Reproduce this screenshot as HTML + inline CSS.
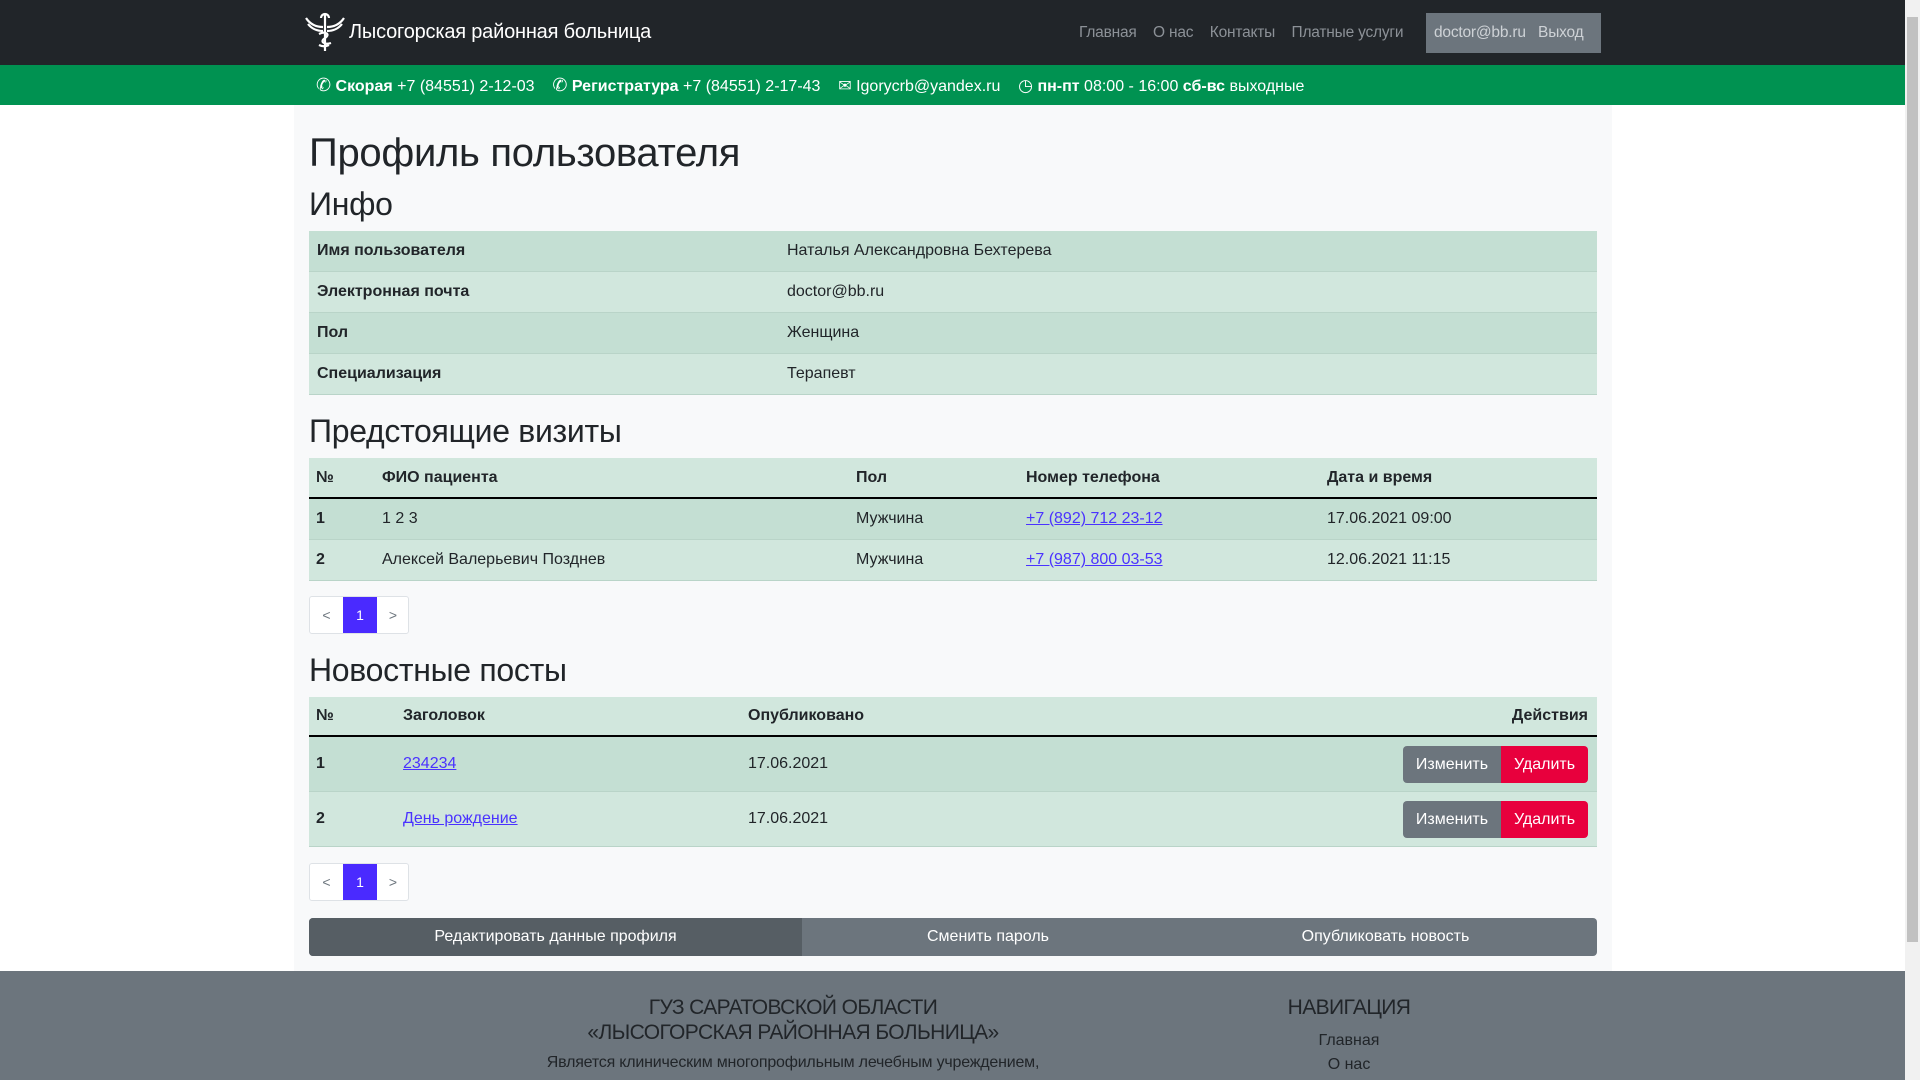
<!DOCTYPE html>
<html><head><meta charset="utf-8"><style>
*{box-sizing:border-box;margin:0;padding:0}
body{width:1920px;height:1080px;overflow:hidden;font-family:"Liberation Sans",sans-serif;font-size:16px;color:#212529;background:#fff;position:relative}
.a{position:absolute}
.nav{left:0;top:0;width:1905px;height:65px;background:#212529}
.green{left:0;top:65px;width:1905px;height:40px;background:#009251;color:#fff;font-size:16px}
.cont{left:294px;top:105px;width:1318px;height:866px;background:#f8f9fa}
h1{position:absolute;left:309px;font-weight:400;font-size:40px;line-height:48px;letter-spacing:-0.3px}
h2{position:absolute;left:309px;font-weight:400;font-size:32px;line-height:38px;letter-spacing:-0.3px}
.tbl{position:absolute;left:309px;width:1288px}
.row{position:absolute;left:0;width:1288px;border-bottom:1px solid #b9d4c8}
.c{position:absolute;top:0;height:100%;display:flex;align-items:center}
.b{font-weight:700}
.dk{background:#c4dfd3}.lt{background:#d1e7dd}
a{color:#4a32ff;text-decoration:underline}
.pg{position:absolute;left:309px;height:38px;width:100px;border:1px solid #dee2e6;background:#fff;border-radius:3px}
.pg span{position:absolute;top:0;height:36px;display:flex;align-items:center;justify-content:center;color:#6c757d;font-size:14px}
.btn{position:absolute;display:flex;align-items:center;justify-content:center;color:#fff;font-size:16px}
.foot{left:0;top:971px;width:1905px;height:109px;background:#6c757d}
.ft{position:absolute;text-align:center;color:#212529}
</style></head><body>
<div class="a nav"></div>
<svg class="a" style="left:304px;top:12px" width="42" height="40" viewBox="0 0 42 40" fill="none" stroke="#fff" stroke-width="2.2"><path d="M21 2v37M17 6a4 4 0 0 1 8 0M2 6c4 6 10 9 17 9M40 6c-4 6-10 9-17 9M4 12c4 5 9 7 15 7M38 12c-4 5-9 7-15 7M15 22c6-3 12 0 6 4c-6 4 0 7 6 5M15 33c4 2 8 1 10 0"/></svg>
<div class="a" style="left:349px;top:19px;color:#fff;font-size:20px;line-height:26px;letter-spacing:-0.2px">Лысогорская районная больница</div>
<div class="a" style="left:1079px;top:23px;color:#8c9197;font-size:15.5px;line-height:20px;letter-spacing:-0.2px">Главная&nbsp;&nbsp;&nbsp; О нас&nbsp;&nbsp;&nbsp; Контакты&nbsp;&nbsp;&nbsp; Платные услуги</div>
<div class="a" style="left:1426px;top:13px;width:175px;height:40px;background:#6c757d"></div>
<div class="a" style="left:1434px;top:23px;color:#ced2d6;font-size:15.5px;line-height:20px;letter-spacing:-0.2px">doctor@bb.ru&nbsp;&nbsp;&nbsp;Выход</div>
<div class="a green"></div>
<div class="a" style="left:316px;top:75px;color:#fff;line-height:20px;white-space:nowrap;font-size:16px">
<span style="font-size:18px">✆</span> <b>Скорая</b> +7 (84551) 2-12-03 &nbsp;&nbsp; <span style="font-size:18px">✆</span> <b>Регистратура</b> +7 (84551) 2-17-43 &nbsp;&nbsp; <span style="font-size:16px">✉</span> Igorycrb@yandex.ru &nbsp;&nbsp; <span style="font-size:17px">◷</span> <b>пн-пт</b> 08:00 - 16:00 <b>сб-вс</b> выходные</div>
<div class="a cont"></div>
<h1 style="top:129px">Профиль пользователя</h1>
<h2 style="top:185px">Инфо</h2>
<div class="tbl" style="top:231px;height:164px">
<div class="row dk" style="top:0;height:41px"><div class="c b" style="left:8px">Имя пользователя</div><div class="c" style="left:478px">Наталья Александровна Бехтерева</div></div>
<div class="row lt" style="top:41px;height:41px"><div class="c b" style="left:8px">Электронная почта</div><div class="c" style="left:478px">doctor@bb.ru</div></div>
<div class="row dk" style="top:82px;height:41px"><div class="c b" style="left:8px">Пол</div><div class="c" style="left:478px">Женщина</div></div>
<div class="row lt" style="top:123px;height:41px"><div class="c b" style="left:8px">Специализация</div><div class="c" style="left:478px">Терапевт</div></div>
</div>
<h2 style="top:412px">Предстоящие визиты</h2>
<div class="tbl" style="top:458px;height:122px">
<div class="row lt b" style="top:0;height:41px;border-bottom:2px solid #000"><div class="c" style="left:7px">№</div><div class="c" style="left:73px">ФИО пациента</div><div class="c" style="left:547px">Пол</div><div class="c" style="left:717px">Номер телефона</div><div class="c" style="left:1018px">Дата и время</div></div>
<div class="row dk" style="top:41px;height:41px"><div class="c b" style="left:7px">1</div><div class="c" style="left:73px">1 2 3</div><div class="c" style="left:547px">Мужчина</div><div class="c" style="left:717px"><a>+7 (892) 712 23-12</a></div><div class="c" style="left:1018px">17.06.2021 09:00</div></div>
<div class="row lt" style="top:82px;height:41px"><div class="c b" style="left:7px">2</div><div class="c" style="left:73px">Алексей Валерьевич Позднев</div><div class="c" style="left:547px">Мужчина</div><div class="c" style="left:717px"><a>+7 (987) 800 03-53</a></div><div class="c" style="left:1018px">12.06.2021 11:15</div></div>
</div>
<div class="pg" style="top:596px"><span style="left:0;width:33px">&lt;</span><span style="left:33px;width:34px;background:#4a2aff;color:#fff">1</span><span style="left:67px;width:32px">&gt;</span></div>
<h2 style="top:651px">Новостные посты</h2>
<div class="tbl" style="top:697px;height:150px">
<div class="row lt b" style="top:0;height:40px;border-bottom:2px solid #000"><div class="c" style="left:7px">№</div><div class="c" style="left:94px">Заголовок</div><div class="c" style="left:439px">Опубликовано</div><div class="c" style="right:9px">Действия</div></div>
<div class="row dk" style="top:40px;height:55px"><div class="c b" style="left:7px">1</div><div class="c" style="left:94px"><a>234234</a></div><div class="c" style="left:439px">17.06.2021</div></div>
<div class="row lt" style="top:95px;height:55px"><div class="c b" style="left:7px">2</div><div class="c" style="left:94px"><a>День рождение</a></div><div class="c" style="left:439px">17.06.2021</div></div>
</div>
<div class="btn" style="left:1403px;top:746px;width:98px;height:37px;background:#6c757d;border-radius:4px 0 0 4px">Изменить</div>
<div class="btn" style="left:1501px;top:746px;width:87px;height:37px;background:#e8003d;border-radius:0 4px 4px 0">Удалить</div>
<div class="btn" style="left:1403px;top:801px;width:98px;height:37px;background:#6c757d;border-radius:4px 0 0 4px">Изменить</div>
<div class="btn" style="left:1501px;top:801px;width:87px;height:37px;background:#e8003d;border-radius:0 4px 4px 0">Удалить</div>
<div class="pg" style="top:863px"><span style="left:0;width:33px">&lt;</span><span style="left:33px;width:34px;background:#4a2aff;color:#fff">1</span><span style="left:67px;width:32px">&gt;</span></div>
<div class="a" style="left:309px;top:918px;width:1288px;height:38px;background:#6c757d;border-radius:4px"></div>
<div class="btn" style="left:309px;top:918px;width:493px;height:38px;background:#565e64;border-radius:4px 0 0 4px">Редактировать данные профиля</div>
<div class="btn" style="left:802px;top:918px;width:372px;height:38px">Сменить пароль</div>
<div class="btn" style="left:1174px;top:918px;width:423px;height:38px">Опубликовать новость</div>
<div class="a foot"></div>
<div class="ft" style="left:493px;width:600px;top:995px;font-size:21px;line-height:25px;letter-spacing:-0.6px">ГУЗ САРАТОВСКОЙ ОБЛАСТИ<br>«ЛЫСОГОРСКАЯ РАЙОННАЯ БОЛЬНИЦА»</div>
<div class="ft" style="left:493px;width:600px;top:1053px;font-size:16px;line-height:20px;letter-spacing:-0.2px">Является клиническим многопрофильным лечебным учреждением,</div>
<div class="ft" style="left:1199px;width:300px;top:995px;font-size:21px;line-height:26px;letter-spacing:-0.6px">НАВИГАЦИЯ</div>
<div class="ft" style="left:1199px;width:300px;top:1029px;font-size:16px;line-height:24px">Главная<br>О нас</div>
<div class="a" style="left:1905px;top:0;width:15px;height:1080px;background:#f1f1f1"></div>
<div class="a" style="left:1907px;top:17px;width:11px;height:925px;background:#c1c1c1"></div>
</body></html>
